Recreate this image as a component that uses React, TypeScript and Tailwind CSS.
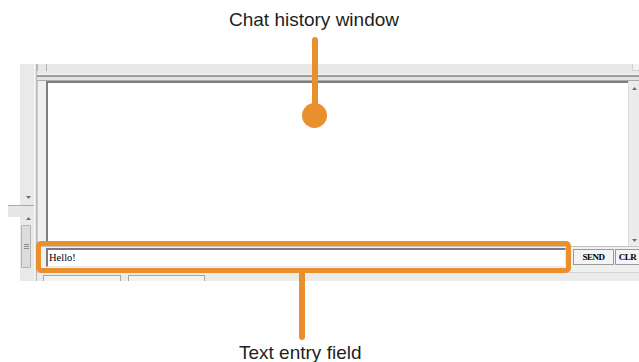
import React from "react";

const orange = "bg-[#e98f2e]";

function ArrowUp({ className = "" }: { className?: string }) {
  return (
    <svg width="5" height="3" viewBox="0 0 5 3" className={className}>
      <path d="M0 3 L2.5 0 L5 3 Z" fill="#6e6e6e" />
    </svg>
  );
}

function ArrowDown({ className = "" }: { className?: string }) {
  return (
    <svg width="5" height="3" viewBox="0 0 5 3" className={className}>
      <path d="M0 0 L5 0 L2.5 3 Z" fill="#6e6e6e" />
    </svg>
  );
}

function LeftGutter() {
  return (
    <div className="flex w-[12px] flex-col">
      <div className="h-[141px]" />
      <div className="h-[12px] border-t border-[#a9a9a9] bg-[#e7e7e7]" />
    </div>
  );
}

function SidePanel() {
  return (
    <div className="flex w-[14px] flex-col bg-[#e9e9e9]">
      <div className="flex h-[141px] flex-col items-center justify-end pb-[6px] pl-[2px]">
        <ArrowDown />
      </div>
      <div className="h-[12px] border-t border-[#a9a9a9] bg-[#e7e7e7]" />
      <div className="flex h-[8px] items-start justify-center pl-[2px]">
        <ArrowUp />
      </div>
      <div className="ml-[1px] flex h-[43px] w-[10px] flex-col items-center justify-center gap-[1px] rounded-[1px] border border-[#b4b4b4] bg-[#dcdcdc]">
        <div className="h-px w-[5px] bg-[#8a8a8a]" />
        <div className="h-px w-[5px] bg-[#8a8a8a]" />
        <div className="h-px w-[5px] bg-[#8a8a8a]" />
      </div>
    </div>
  );
}

function ChatWindow() {
  return (
    <div className="flex w-[602px] flex-col bg-[#f0f0f0]">
      {/* top strip */}
      <div className="flex h-[10px] bg-[#e8e8e8]">
        <div className="h-[7px] w-px bg-[#b0b0b0]" />
        <div className="ml-[8px] h-[7px] w-px bg-[#b0b0b0]" />
        <div className="flex-1" />
        <div className="h-[7px] w-[7px] border-b border-l border-[#d0d0d0] bg-[#f2f2f2]" />
      </div>
      <div className="h-px bg-[#f6f6f6]" />
      <div className="h-[2px] bg-[#9c9c9c]" />
      <div className="h-[3px] bg-[#e2e2e2]" />
      <div className="h-px bg-[#ababab]" />

      {/* history area */}
      <div className="flex h-[165px]">
        <div className="w-[9px] border-l border-[#c8c8c8] bg-[#f0f0f0]" />
        <div className="flex-1 border-l-2 border-t-2 border-[#7e7e7e] bg-white" />
        <div className="flex w-[11px] flex-col items-center justify-between border-l border-[#dcdcdc] bg-[#ececec] pb-[4px] pt-[6px]">
          <ArrowUp />
          <ArrowDown />
        </div>
      </div>

      {/* entry row */}
      <div className="flex h-[26px] items-start border-t border-[#c4c4c4]">
        <div className="w-[9px]" />
        <div className="mt-[1px] flex h-[19px] w-[520px] items-center border-l-2 border-t-2 border-b border-r border-l-[#7a7a7a] border-t-[#7a7a7a] border-b-[#e8e8e8] border-r-[#e8e8e8] bg-white pl-[1px] font-['Liberation_Serif',serif] text-[10.5px] leading-none text-black">
          Hello!
        </div>
        <div className="w-[7px]" />
        <button className="mt-[2px] flex h-[16px] w-[41px] items-center justify-center border border-[#9a9a9a] bg-[#f4f4f4] font-['Liberation_Serif',serif] text-[9px] font-bold leading-none tracking-[-0.5px] text-black">
          SEND
        </button>
        <div className="w-px" />
        <button className="mt-[2px] flex h-[16px] w-[24px] items-center justify-center border border-r-0 border-[#9a9a9a] bg-[#f4f4f4] font-['Liberation_Serif',serif] text-[9px] font-bold leading-none tracking-[-0.5px] text-black">
          CLR
        </button>
      </div>

      {/* tabs */}
      <div className="flex h-[9px] items-end gap-[7px] border-t border-[#d4d4d4] bg-[#ebebeb] pl-[6px]">
        <div className="h-[6px] w-[78px] border-l border-r border-t border-[#a6a6a6] bg-[#f3f3f3]" />
        <div className="h-[6px] w-[77px] border-l border-r border-t border-[#a6a6a6] bg-[#f3f3f3]" />
      </div>
    </div>
  );
}

export default function App() {
  return (
    <div className="relative h-[362px] w-[639px] overflow-hidden bg-white font-['Liberation_Sans',Arial,sans-serif]">
      <div className="pt-[64px] pl-[8px]">
        <div className="flex h-[217px]">
          <LeftGutter />
          <SidePanel />
          <div className="w-[3px] border-l border-r border-l-[#f8f8f8] border-r-[#bdbdbd] bg-[#e4e4e4]" />
          <ChatWindow />
        </div>
      </div>

      {/* annotations */}
      <div className="absolute left-[229px] top-[10px] text-[19px] leading-none text-[#231f20]">
        Chat history window
      </div>
      <div className={`absolute left-[312px] top-[37px] h-[78px] w-[6px] rounded-full ${orange}`} />
      <div className={`absolute left-[302px] top-[103px] h-[25px] w-[25px] rounded-full ${orange}`} />

      <div className="absolute left-[36px] top-[241px] h-[32px] w-[535px] rounded-[5px] border-[5px] border-[#e98f2e]" />
      <div className={`absolute left-[299px] top-[272px] h-[68px] w-[6px] rounded-b-full ${orange}`} />
      <div className="absolute left-[239px] top-[343px] text-[19px] leading-none text-[#231f20]">
        Text entry field
      </div>
    </div>
  );
}
